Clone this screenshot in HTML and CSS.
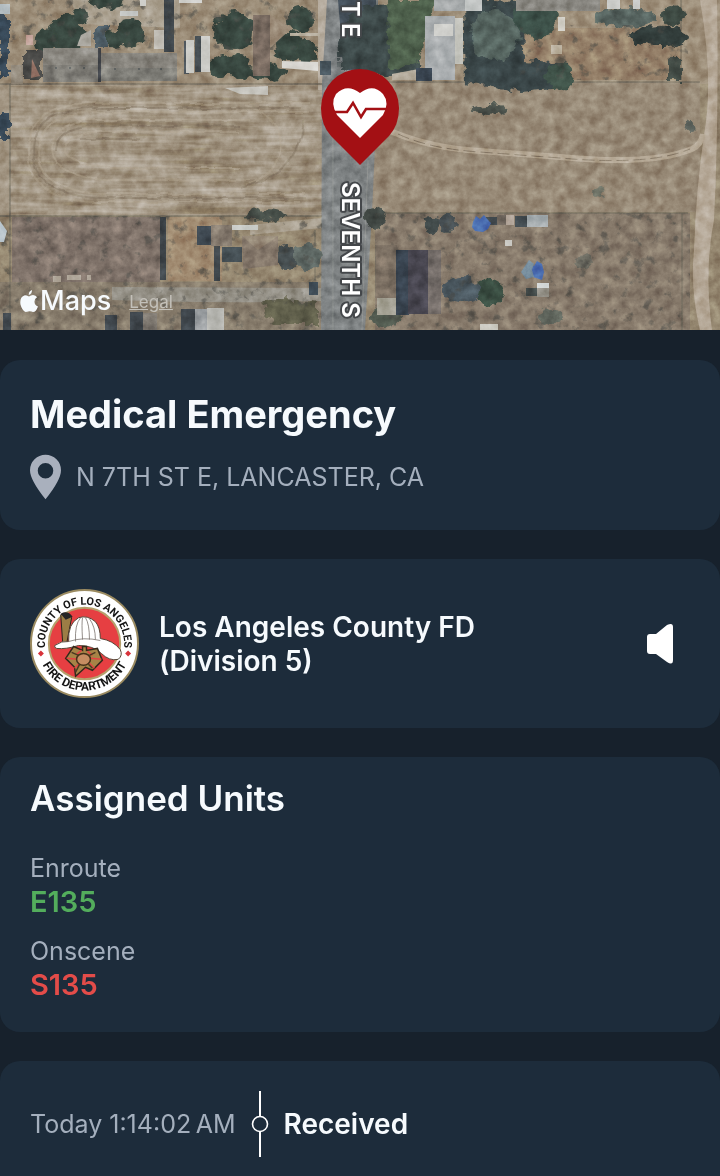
FILE: index.html
```html
<!DOCTYPE html>
<html lang="en">
<head>
<meta charset="utf-8">
<meta name="viewport" content="width=device-width, initial-scale=1">
<title>Medical Emergency</title>
<link rel="stylesheet" href="styles.css">
</head>
<body>
<div class="page">
  <header class="map">
    <svg class="map-image" viewBox="0 0 720 330" preserveAspectRatio="xMidYMid slice" role="img" aria-label="Satellite map of Seventh Street East">
      <defs>
        <filter id="grain" x="0" y="0" width="100%" height="100%" color-interpolation-filters="sRGB">
          <feTurbulence type="fractalNoise" baseFrequency="0.09" numOctaves="5" seed="8"/>
          <feColorMatrix values="1.2 0 0 0 -.1  1.2 0 0 0 -.1  1.2 0 0 0 -.1  0 0 0 0 1"/>
          <feGaussianBlur stdDeviation="0.5"/>
        </filter>
        <filter id="streaks" x="0" y="0" width="100%" height="100%" color-interpolation-filters="sRGB">
          <feTurbulence type="fractalNoise" baseFrequency="0.012 0.14" numOctaves="3" seed="4"/>
          <feColorMatrix values="1.4 0 0 0 -.2  1.4 0 0 0 -.2  1.4 0 0 0 -.2  0 0 0 0 1"/>
        </filter>
        <filter id="scrub" x="0" y="0" width="100%" height="100%" color-interpolation-filters="sRGB">
          <feTurbulence type="fractalNoise" baseFrequency="0.09" numOctaves="4" seed="21"/>
          <feColorMatrix values="0 0 0 0 .3  0 0 0 0 .3  0 0 0 0 .28  6 0 0 0 -3.6"/>
        </filter>
        <filter id="rough" x="-20%" y="-20%" width="140%" height="140%">
          <feTurbulence type="fractalNoise" baseFrequency="0.1" numOctaves="3" seed="3" result="n"/>
          <feDisplacementMap in="SourceGraphic" in2="n" scale="12" xChannelSelector="R" yChannelSelector="G"/>
          <feGaussianBlur stdDeviation="0.7"/>
        </filter>
        <filter id="wobble" x="-5%" y="-5%" width="110%" height="110%">
          <feTurbulence type="fractalNoise" baseFrequency="0.05" numOctaves="2" seed="9" result="n"/>
          <feDisplacementMap in="SourceGraphic" in2="n" scale="5" xChannelSelector="R" yChannelSelector="G"/>
          <feGaussianBlur stdDeviation="0.6"/>
        </filter>
      </defs>

      <rect width="720" height="330" fill="#94866f"/>
      <!-- open fields -->
      <rect width="720" height="84" fill="#9b8c77"/>
      <path d="M0 84H322V216H0z" fill="#a09380"/>
      <path d="M372 82H700V212H372z" fill="#978976"/>
      <path d="M12 217H160V290H12z" fill="#80736a"/>
      <path d="M168 217H222V281H168z" fill="#a08a70"/>
      <path d="M0 282H322V330H0z" fill="#867b6b"/>
      <path d="M375 213H690V330H375z" fill="#877a6b"/>
      <path d="M520 28H682V80H520z" fill="#958069"/>
      <path d="M10 86H322V214H10z" filter="url(#streaks)" opacity=".3" class="blend"/>
      <g fill="none" stroke="#b5a996" stroke-width="2" opacity=".5" filter="url(#wobble)">
        <path d="M310 103H88Q30 105 28 150Q28 202 100 202H300"/>
        <path d="M310 112H90Q40 116 38 152Q40 190 100 194H305"/>
        <path d="M250 120H85Q52 126 51 150Q54 176 105 180H250"/>
        <path d="M240 132H90Q66 136 66 150Q68 164 110 168H240"/>
        <path d="M245 105Q285 120 280 150Q276 178 230 192"/>
      </g>
      <g fill="none" stroke="#817361" stroke-width="2" opacity=".45" filter="url(#wobble)">
        <path d="M300 108H90Q35 110 33 150Q34 196 100 198H305"/>
        <path d="M240 126H88Q56 130 56 150"/>
        <path d="M80 139H140M240 188Q300 175 304 120"/>
      </g>

      <!-- dirt tracks and driveways -->
      <path d="M700 0Q714 80 704 135Q696 190 694 250Q690 290 700 330H712Q704 270 714 220Q719 120 717 0z" fill="#b5a897"/>
      <path d="M390 131Q430 148 480 151L560 157Q650 166 692 149Q701 145 703 134" fill="none" stroke="#b5a895" stroke-width="6"/>
      <path d="M398 134Q430 149 480 152L560 158Q650 166 690 149" fill="none" stroke="#8d806e" stroke-width="1" stroke-dasharray="12 5"/>
      <path d="M112 287L322 288V301Q220 304 112 300z" fill="#959187"/>
      <path d="M250 225L322 218V228L250 235zM70 0H180V28L82 24z" fill="#aaa08f"/>
      <path d="M318 0H328V90H318z" fill="#b4aa9c"/>

      <!-- asphalt road -->
      <path d="M327 0H378V80L372 213L365 330H321L322 84z" fill="#7f8384"/>
      <path d="M338 0H376V70H344z" fill="#45505a"/>
      <path d="M333 84V330M368 160L362 330" stroke="#9b9c99" stroke-width="1" fill="none" opacity=".6"/>

      <!-- fences and lot edges -->
      <g fill="none" stroke="#6b665b" stroke-width="1">
        <path d="M10 84V330M0 84H322M0 216H322M375 82H700M375 213H688M681 0V80M682 213V330M376 245V298M315 230V280"/>
      </g>
      <path d="M160 217H166V280H160zM214 245H220V281H214zM164 0H174V52H164z" fill="#3e454a"/>

      <!-- trees -->
      <g filter="url(#rough)">
        <g fill="#38463f">
          <circle cx="66" cy="35" r="19"/><circle cx="46" cy="41" r="11"/><circle cx="130" cy="33" r="14"/>
          <circle cx="115" cy="38" r="10"/><circle cx="234" cy="30" r="20"/><circle cx="222" cy="65" r="12"/><circle cx="240" cy="67" r="12"/>
          <circle cx="300" cy="20" r="13"/><circle cx="289" cy="46" r="15"/><circle cx="307" cy="52" r="11"/><ellipse cx="268" cy="73" rx="18" ry="7"/>
          <circle cx="80" cy="15" r="8"/><ellipse cx="106" cy="2" rx="16" ry="7"/>
        </g>
        <path d="M338 42Q345 10 376 5L430 0L418 70L390 76L340 68z" fill="#3c484a"/>
        <path d="M386 0H435L420 60L390 72z" fill="#4d5f4c"/>
        <path d="M464 0L520 2L524 60L568 63L562 88L520 92L466 82z" fill="#3a4748"/>
        <circle cx="495" cy="35" r="25" fill="#566561"/>
        <circle cx="536" cy="18" r="21" fill="#3d5148"/><circle cx="560" cy="76" r="14" fill="#3f5349"/>
        <ellipse cx="625" cy="18" rx="30" ry="10" fill="#56645f"/><ellipse cx="660" cy="36" rx="28" ry="11" fill="#303c3a"/>
        <circle cx="673" cy="14" r="11" fill="#3c4943"/><path d="M668 58H681V80H668z" fill="#424b44"/>
        <ellipse cx="488" cy="110" rx="17" ry="5" fill="#48504a"/>
        <ellipse cx="265" cy="215" rx="19" ry="6" fill="#465049"/>
        <circle cx="287" cy="258" r="12" fill="#475051"/><circle cx="308" cy="257" r="13" fill="#616b66"/>
        <circle cx="375" cy="218" r="11" fill="#424a45"/><circle cx="432" cy="224" r="8" fill="#424c4c"/><circle cx="448" cy="222" r="9" fill="#465052"/>
        <circle cx="490" cy="292" r="14" fill="#374c41"/><ellipse cx="462" cy="290" rx="19" ry="13" fill="#4b5961"/>
        <path d="M263 302Q275 295 318 304V325H273z" fill="#615f4c"/><ellipse cx="385" cy="318" rx="16" ry="9" fill="#525b51"/>
        <circle cx="598" cy="192" r="6" fill="#767a6d"/><circle cx="690" cy="126" r="5" fill="#5c625b"/>
        <ellipse cx="585" cy="262" rx="9" ry="6" fill="#6d6c62"/><ellipse cx="552" cy="317" rx="14" ry="7" fill="#62675e"/>
        <path d="M0 15H9V80H0zM0 112H9V138H0z" fill="#394a58"/>
        <path d="M24 50H42V79H24z" fill="#494846"/><path d="M95 25H107V46H95z" fill="#4d5b65"/>
      </g>

      <!-- yard scrub -->
      <g opacity=".55">
        <path d="M10 0H318V50H10z" filter="url(#scrub)"/>
        <path d="M375 213H690V330H375z" filter="url(#scrub)"/>
        <path d="M520 25H690V80H520z" filter="url(#scrub)"/>
        <path d="M0 216H322V330H0z" filter="url(#scrub)"/>
      </g>

      <!-- buildings -->
      <path d="M43 48H98V82H43z" fill="#7e7c76"/><path d="M43 48H98V65H43z" fill="#8b8881"/>
      <path d="M101 53H177V81H101z" fill="#7d7c76"/><path d="M101 53H177V68H101z" fill="#88857e"/>
      <path d="M98 48h3v34h-3z" fill="#42454a"/>
      <g fill="#55585a"><circle cx="56" cy="68" r="1"/><circle cx="70" cy="68" r="1"/><circle cx="84" cy="68" r="1"/><circle cx="115" cy="69" r="1"/><circle cx="139" cy="69" r="1"/><circle cx="161" cy="69" r="1"/></g>
      <path d="M32 59L40 76L31 78z" fill="#8e6c60"/><path d="M11 65H23V84H11z" fill="#948b7d"/>
      <path d="M184 41H189V74H184z" fill="#4e565c"/>
      <path d="M186 40H194V73H186zM201 36H210V72H201z" fill="#cbcbc6"/><path d="M195 36H201V72H195z" fill="#454d52"/>
      <path d="M154 30H164V49H154z" fill="#c1bdb5"/><path d="M120 11H138V16H120z" fill="#c6c8c6"/><path d="M179 0H202V3H179zM140 0H146V6H140z" fill="#d2d2ce"/>
      <path d="M81 35L91 30V46H77z" fill="#aaa79f"/><path d="M26 35h7v10h-7z" fill="#c3a299"/>
      <path d="M253 15H270V76H253z" fill="#786a60"/><path d="M270 15L292 28L270 48z" fill="#9b8b78"/>
      <path d="M290 33H320V36H290z" fill="#bbb3a4"/><path d="M282 61L318 62V71L282 68z" fill="#d7d5cf"/><path d="M320 61H331V75H320z" fill="#47545c"/>
      <path d="M225 88L268 86V95L240 94z" fill="#c5c3bc"/>
      <path d="M425 16H455V80H425z" fill="#a9adaf"/><path d="M434 24H453V36H434z" fill="#d0d0cc"/><path d="M455 18H463V64H455z" fill="#c4c4bd"/>
      <path d="M434 0H482V11H434z" fill="#a1a5a6"/><path d="M465 0H482V11H465z" fill="#c4c7c6"/><path d="M392 74L424 68V80H392z" fill="#b2a999"/><path d="M416 68H432V81H416z" fill="#394450"/>
      <path d="M516 0H600V11H516z" fill="#8b8983"/><path d="M607 0H620V9H607zM633 0H640V9H633z" fill="#cdcecb"/><path d="M558 17H565V31H558z" fill="#d1cec5"/><path d="M551 45H562V54H551z" fill="#bbb19f"/>
      <path d="M197 226H211V245H197z" fill="#414b54"/><path d="M211 225H232V246H211z" fill="#84796d"/><path d="M222 247H242V262H222z" fill="#454f54"/>
      <path d="M242 236H278V265L243 269z" fill="#84776a"/><path d="M242 236H278L258 250z" fill="#928473"/><path d="M232 225h26v5h-26z" fill="#c9cbc7"/>
      <path d="M376 245H397V298H376z" fill="#7c7063"/><path d="M396 250H409V315H396z" fill="#394450"/><path d="M408 250H428V314H408z" fill="#484650"/><path d="M428 250H441V314H428z" fill="#716a66"/><path d="M377 298H396V315H377z" fill="#a5a295"/>
      <path d="M497 215H506V225H497z" fill="#71685f"/><path d="M506 215H514V225H506z" fill="#b0a397"/><path d="M515 216H527V227H515z" fill="#424b50"/><path d="M527 215H548V227H527z" fill="#a6adb0"/><path d="M486 217h11v8h-11z" fill="#434b50"/>
      <path d="M526 288H537V296H526z" fill="#454d4c"/><path d="M537 283H549V297H537z" fill="#96938a"/><path d="M537 283h12v5h-12z" fill="#d3d7d7"/>
      <path d="M473 222l3-6 4 3 4-4 4 5 3 3-3 6-5 3-8-1-3-4zM529 266l5 0 3-5 5 3 2 8-2 8-9-3-6 0z" fill="#496baf"/>
      <path d="M521 272l4-6 4-6 5 4-2 6 2 7-8 2z" fill="#738a9b"/><path d="M505 240h7v6h-7z" fill="#c9c8c2"/>
      <path d="M0 221L7 231 4 242H0z" fill="#bdc8cf"/><path d="M0 4H10V14H0z" fill="#b0babe"/>
      <path d="M181 309H195V330H181zM130 312H143V330H130zM105 315H117V330H105zM3 313H11V330H3z" fill="#3f464c"/>
      <path d="M195 309H207V330H195z" fill="#989c9f"/><path d="M207 308H224V330H207z" fill="#b8b8b3"/><path d="M143 313H157V330H143z" fill="#817b73"/>
      <path d="M53 276h8v6h-8zM67 275h14v5h-14zM87 275h4v5h-4z" fill="#b0a79a"/><path d="M309 282H318V295H309z" fill="#3e4b55"/>
      <path d="M480 324H498V330H480z" fill="#c9c7be"/>
      <rect width="720" height="330" filter="url(#grain)" opacity=".28" class="blend"/>

      <g class="street">
        <text transform="translate(342 182) rotate(90)">SEVENTH S</text>
        <text transform="translate(342 1) rotate(90)">T E</text>
      </g>
      <g>
        <path d="M360 165L331 136Q321 125 321 108A39 39 0 0 1 399 108Q399 125 389 136z" fill="#a31014"/>
        <path d="M360 138L337 115Q330 103 336 94Q347 83 360 93Q373 83 383 94Q390 103 383 115z" fill="#fff"/>
        <path d="M332 112H347L353 103L361 117L366 109H389" fill="none" stroke="#a31014" stroke-width="2.500"/>
      </g>
    </svg>
    <div class="attribution">
      <span class="brand">
        <svg class="apple" viewBox="0 0 18 24" aria-hidden="true"><path d="M12 1Q12 5 8.800 6Q8.500 2.500 12 1M9 7.500Q11 6 13 6Q16 6.200 17 8.300Q14.300 10 14.500 13Q14.700 16.200 18 17.500Q16 23 13 23Q11 22 9.200 22.200Q7 23 5.600 23Q2 21.500 .5 15.500Q-.5 8 4.200 6.400Q6 6 9 7.500z" fill="currentColor"/></svg>
        Maps
      </span>
      <a class="legal" href="#legal">Legal</a>
    </div>
  </header>

  <main class="cards">
    <section class="card">
      <h1 class="title">Medical Emergency</h1>
      <p class="address">
        <svg class="pin" viewBox="0 0 32 46" aria-hidden="true"><path fill-rule="evenodd" d="M16 46Q0 26 0 16A16 16 0 0 1 32 16Q32 26 16 46zM16 8.500a8 8 0 1 0 0 16a8 8 0 0 0 0-16z" fill="currentColor"/></svg>
        <span>N 7TH ST E, LANCASTER, CA</span>
      </p>
    </section>

    <section class="card agency">
      <svg class="seal" viewBox="0 0 110 110" role="img" aria-label="County of Los Angeles Fire Department seal">
        <defs>
          <path id="arc-top" d="M15.500 62A40 40 0 1 1 94.500 62"/>
          <path id="arc-bottom" d="M7.500 55A47.500 47.500 0 0 0 102.500 55"/>
        </defs>
        <circle cx="55" cy="55" r="54" fill="#fff" stroke="#9b8b61" stroke-width="2"/>
        <circle cx="55" cy="55" r="36" fill="#e63f42" stroke="#b5a06c" stroke-width="2"/>
        <text class="seal-text" text-anchor="middle"><textPath href="#arc-top" startOffset="50%">COUNTY OF LOS ANGELES</textPath></text>
        <text class="seal-text seal-text-lower" text-anchor="middle"><textPath href="#arc-bottom" startOffset="50%">FIRE DEPARTMENT</textPath></text>
        <path d="M11 62l3 3-3 3-3-3zM99 62l3 3-3 3-3-3z" fill="#d8323a"/>
        <path d="M31 26Q38 22 42 29L37 55L33 54z" fill="#9c7d45" stroke="#2a241d"/>
        <path d="M31 25Q38 21 43 28L36 31z" fill="#252525"/>
        <path d="M25 57Q32 52 39 53Q38 35 49 29Q58 26 66 33Q71 39 71 50Q84 52 91 61Q94 67 89 71Q80 73 72 65Q64 57 49 57Q36 61 27 60Q24 59 25 57z" fill="#fff" stroke="#554637"/>
        <path d="M39 53Q54 48 71 52M46 53Q45 36 51 29M53 51Q52 34 53 29M60 51Q60 35 56 29M66 51Q66 38 60 30" fill="none" stroke="#77706a" stroke-width=".8"/>
        <path d="M36 70L44 58L53 62V58H57V62L68 60L73 72L63 82L56 79L46 88L45 79z" fill="#a68346" stroke="#33291b" stroke-width="1.500"/>
        <path d="M37 70L48 71M45 80L50 75M60 75L65 80M72 71L61 70M52 62L47 66M58 63L63 67" stroke="#e63f42" stroke-width="1.500"/>
        <path d="M42 64L49 67M66 64L60 67M46 84L50 76M63 80L59 76" stroke="#493821" stroke-width="1.500"/>
        <ellipse cx="54" cy="71" rx="7" ry="6" fill="#c68d62" stroke="#453119" stroke-width="1.500"/>
      </svg>
      <h2 class="agency-name">Los Angeles County FD (Division 5)</h2>
      <button class="audio" type="button" aria-label="Play audio">
        <svg class="speaker" viewBox="0 0 28 42" aria-hidden="true"><path d="M4 11H10L21 2Q27-1 27 4V37Q27 43 21 39L10 31H4Q1 31 1 28V14Q1 11 4 11z" fill="currentColor"/></svg>
      </button>
    </section>

    <section class="card units">
      <h2 class="subtitle">Assigned Units</h2>
      <dl class="unit-list">
        <div><dt>Enroute</dt><dd class="enroute">E135</dd></div>
        <div><dt>Onscene</dt><dd class="onscene">S135</dd></div>
      </dl>
    </section>

    <section class="card timeline">
      <time class="time">Today 1:14:02&#8239;AM</time>
      <svg class="marker" viewBox="0 0 18 66" aria-hidden="true"><path d="M9 0V25M9 41V66" stroke="#fff" stroke-width="2"/><circle cx="9" cy="33" r="7.500" fill="none" stroke="#fff" stroke-width="1.600"/></svg>
      <strong class="event">Received</strong>
    </section>
  </main>
</div>
</body>
</html>
```

FILE: styles.css
```css
* {
  box-sizing: border-box;
}

body {
  margin: 0;
  background: #17212c;
  color: #f6fafd;
  font-family: Inter, "Liberation Sans", sans-serif;
}

h1, h2, p, dl, dd {
  margin: 0;
}

.page {
  display: flex;
  flex-direction: column;
  min-height: 100vh;
}

.map {
  position: relative;
  height: 330px;
  overflow: hidden;
}

.map-image {
  display: block;
  width: 100%;
  height: 100%;
}

.blend {
  mix-blend-mode: overlay;
}

.street {
  fill: #fff;
  stroke: #44474a;
  stroke-width: 4px;
  stroke-linejoin: round;
  paint-order: stroke;
  font-size: 24px;
  font-weight: 600;
}

.attribution {
  position: absolute;
  left: 20px;
  bottom: 12px;
  display: flex;
  align-items: center;
  gap: 18px;
}

.brand {
  display: flex;
  align-items: center;
  gap: 2px;
  font-size: 27px;
  font-weight: 500;
  line-height: 34px;
}

.apple {
  width: 18px;
  height: 24px;
}

.legal {
  color: #c3c0b9;
  font-size: 17px;
  line-height: 24px;
  padding-top: 2px;
}

.cards {
  display: flex;
  flex: 1;
  flex-direction: column;
  gap: 29px;
  padding-top: 30px;
}

.card {
  padding: 30px;
  border-radius: 20px;
  background: #1d2c3b;
}

.title {
  font-size: 38px;
  font-weight: 700;
  line-height: 48px;
}

.address {
  display: flex;
  align-items: center;
  gap: 15px;
  margin-top: 16px;
  color: #a4afbd;
  font-size: 25px;
  line-height: 32px;
}

.pin {
  width: 31px;
  height: 46px;
  color: #a9b0bd;
}

.agency {
  display: flex;
  align-items: center;
  gap: 20px;
}

.seal {
  flex: none;
  width: 109px;
  height: 109px;
}

.seal-text {
  fill: #151515;
  font-family: Roboto, "Liberation Sans", sans-serif;
  font-size: 11px;
  font-weight: 700;
}

.seal-text-lower {
  font-size: 12px;
}

.agency-name {
  flex: 1;
  max-width: 360px;
  font-size: 28px;
  font-weight: 600;
  line-height: 34px;
}

.audio {
  display: flex;
  margin-left: auto;
  padding: 10px 16px;
  border: 0;
  background: none;
  color: #fff;
}

.speaker {
  width: 28px;
  height: 42px;
}

.units {
  padding-top: 17px;
}

.subtitle {
  font-size: 35px;
  font-weight: 600;
  line-height: 48px;
}

.unit-list {
  display: grid;
  gap: 15px;
  margin-top: 29px;
  line-height: 34px;
}

.unit-list dt {
  color: #a4afbd;
  font-size: 25px;
}

.unit-list dd {
  font-size: 29px;
  font-weight: 600;
}

.unit-list .enroute {
  color: #53ad5c;
}

.unit-list .onscene {
  color: #e34c49;
}

.timeline {
  display: flex;
  flex: 1;
  align-items: flex-start;
  gap: 15px;
  padding-bottom: 19px;
  border-radius: 20px 20px 0 0;
  line-height: 66px;
}

.time {
  color: #a4afbd;
  font-size: 25px;
}

.marker {
  width: 18px;
  height: 66px;
}

.event {
  font-size: 28px;
  font-weight: 600;
}
```
